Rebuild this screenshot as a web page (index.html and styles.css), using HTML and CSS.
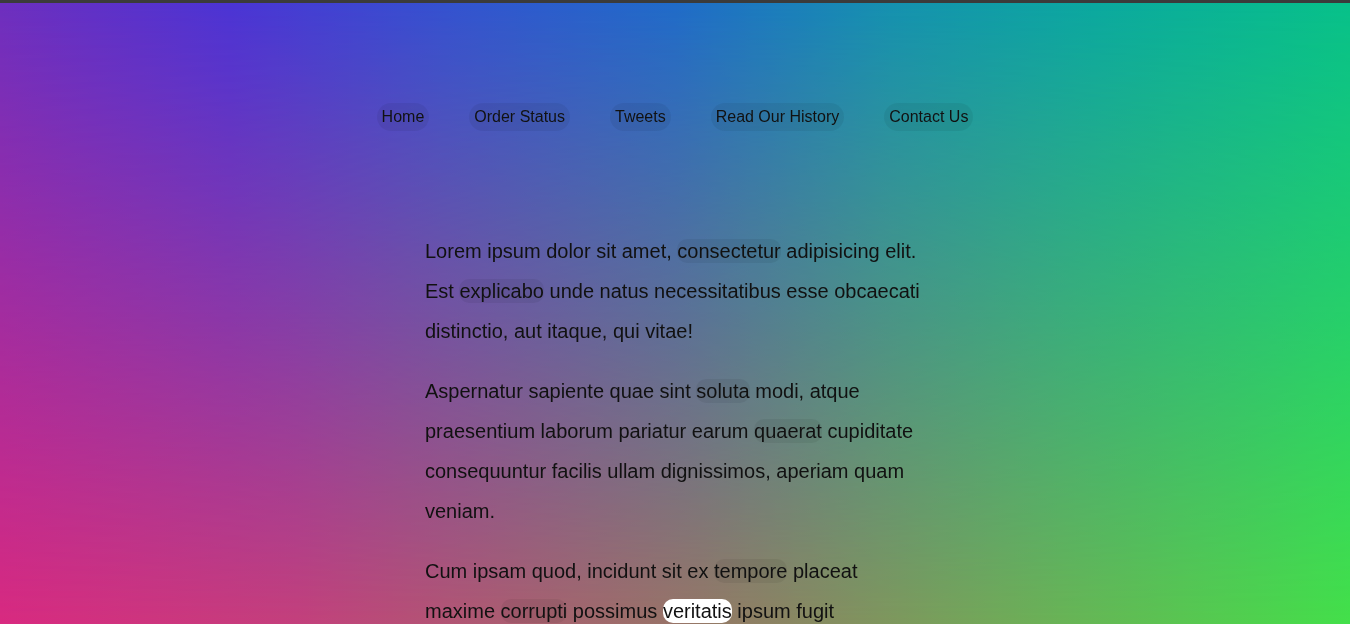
FILE: index.html
```html
<!DOCTYPE html>
<html lang="en">
<head>
<meta charset="utf-8">
<title>Gradient Page</title>
<link rel="stylesheet" href="styles.css">
</head>
<body>
<div class="topbar"></div>
<header class="site-header">
  <nav>
    <ul class="nav">
      <li><a class="nav-link" href="#">Home</a></li>
      <li><a class="nav-link" href="#">Order Status</a></li>
      <li><a class="nav-link" href="#">Tweets</a></li>
      <li><a class="nav-link" href="#">Read Our History</a></li>
      <li><a class="nav-link" href="#">Contact Us</a></li>
    </ul>
  </nav>
</header>
<main class="content">
  <p>Lorem ipsum dolor sit amet, <span class="mark">consectetur</span> adipisicing elit. Est <span class="mark">explicabo</span> unde natus necessitatibus esse obcaecati distinctio, aut itaque, qui vitae!</p>
  <p>Aspernatur sapiente quae sint <span class="mark">soluta</span> modi, atque praesentium laborum pariatur earum <span class="mark">quaerat</span> cupiditate consequuntur facilis ullam dignissimos, aperiam quam veniam.</p>
  <p>Cum ipsam quod, incidunt sit ex <span class="mark">tempore</span> placeat maxime <span class="mark">corrupti</span> possimus <span class="mark mark-active">veritatis</span> ipsum fugit exercitationem, fuga sunt nihil tenetur eveniet.</p>
</main>
</body>
</html>
```
FILE: styles.css
```css
html {
  background: linear-gradient(to right, #d92a80 0%, #c4407c 22%, #957866 52%, #70ac58 75%, #44e04a 100%) fixed;
  min-height: 100%;
}

body {
  margin: 0;
  font-family: "Liberation Sans", Arial, sans-serif;
  color: #111;
}

body::before {
  content: "";
  position: fixed;
  inset: 0;
  z-index: -1;
  background: linear-gradient(to right, #6c2fbf 0%, #4a34d5 17%, #3352d0 33%, #1f6bc9 50%, #1491b0 66%, #0aa8a0 81%, #07c08a 100%);
  -webkit-mask-image: linear-gradient(to bottom, #000 0%, rgba(0,0,0,0) 100%);
  mask-image: linear-gradient(to bottom, #000 0%, rgba(0,0,0,0) 100%);
}

.topbar {
  height: 3px;
  background: #3b3b3b;
}

.site-header {
  padding: 100px 0 80px;
}

.nav {
  list-style: none;
  margin: 0;
  padding: 0;
  display: flex;
  justify-content: center;
  gap: 40px;
  font-size: 16px;
  line-height: 18px;
}

.nav-link {
  display: block;
  padding: 5px;
  border-radius: 14px;
  background: rgba(0, 0, 0, 0.06);
  color: #111;
  text-decoration: none;
}

.content {
  width: 500px;
  margin: 0 auto;
  font-size: 20px;
  line-height: 40px;
}

.content p {
  margin: 20px 0;
}

.mark {
  border-radius: 10px;
  padding: 1px 0;
  background: rgba(0, 0, 0, 0.06);
}

.mark-active {
  background: #fff;
}
```
